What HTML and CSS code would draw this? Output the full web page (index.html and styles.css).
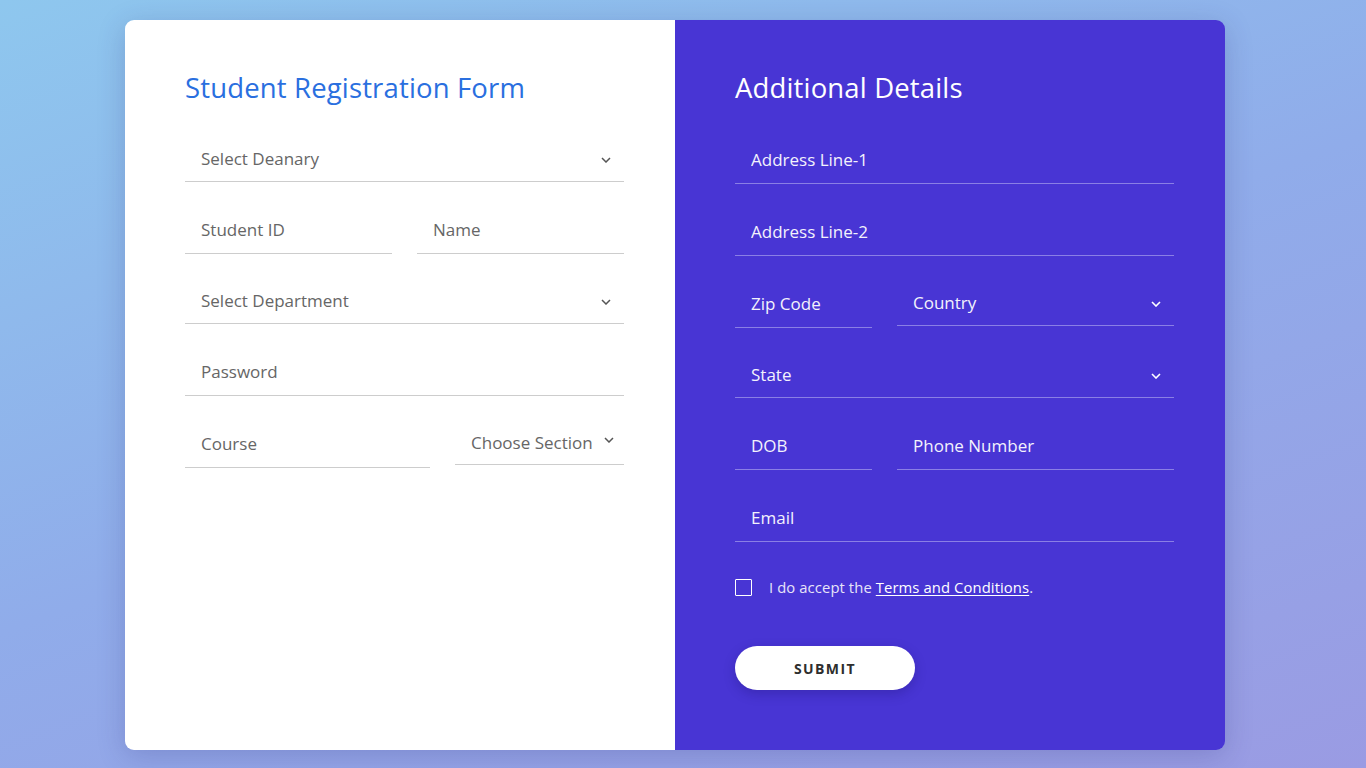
FILE: index.html
```html
<!DOCTYPE html>
<html lang="en">
<head>
<meta charset="utf-8">
<title>Student Registration Form</title>
<link rel="stylesheet" href="styles.css">
</head>
<body>
<section class="page">
  <div class="card">
    <div class="panel panel-light">
      <h3 class="title title-blue">Student Registration Form</h3>

      <div class="field-select">
        <select class="select light">
          <option>Select Deanary</option>
        </select>
        <svg class="chev" width="10" height="6" viewBox="0 0 10 6"><polyline points="1,1 5,5 9,1" fill="none" stroke="#555" stroke-width="1.5"/></svg>
      </div>

      <div class="row two-equal">
        <input class="input light" type="text" placeholder="Student ID">
        <input class="input light" type="text" placeholder="Name">
      </div>

      <div class="field-select">
        <select class="select light">
          <option>Select Department</option>
        </select>
        <svg class="chev" width="10" height="6" viewBox="0 0 10 6"><polyline points="1,1 5,5 9,1" fill="none" stroke="#555" stroke-width="1.5"/></svg>
      </div>

      <input class="input light block" type="password" placeholder="Password">

      <div class="row course-row">
        <input class="input light" type="text" placeholder="Course">
        <div class="field-select">
          <select class="select light">
            <option>Choose Section</option>
          </select>
          <svg class="chev chev-near" width="10" height="6" viewBox="0 0 10 6"><polyline points="1,1 5,5 9,1" fill="none" stroke="#555" stroke-width="1.5"/></svg>
        </div>
      </div>
    </div>

    <div class="panel panel-dark">
      <h3 class="title title-white">Additional Details</h3>

      <input class="input dark block" type="text" placeholder="Address Line-1">
      <input class="input dark block" type="text" placeholder="Address Line-2">

      <div class="row zip-row">
        <input class="input dark" type="text" placeholder="Zip Code">
        <div class="field-select">
          <select class="select dark">
            <option>Country</option>
          </select>
          <svg class="chev" width="10" height="6" viewBox="0 0 10 6"><polyline points="1,1 5,5 9,1" fill="none" stroke="#fff" stroke-width="1.6"/></svg>
        </div>
      </div>

      <div class="field-select">
        <select class="select dark">
          <option>State</option>
        </select>
        <svg class="chev" width="10" height="6" viewBox="0 0 10 6"><polyline points="1,1 5,5 9,1" fill="none" stroke="#fff" stroke-width="1.6"/></svg>
      </div>

      <div class="row zip-row">
        <input class="input dark" type="text" placeholder="DOB">
        <input class="input dark" type="text" placeholder="Phone Number">
      </div>

      <input class="input dark block" type="email" placeholder="Email">

      <label class="check">
        <input type="checkbox" class="check-box">
        <span class="check-text">I do accept the <a href="#" class="terms">Terms and Conditions</a>.</span>
      </label>

      <button type="button" class="submit">SUBMIT</button>
    </div>
  </div>
</section>
<script src="script.js"></script>
</body>
</html>
```

FILE: styles.css
```css
* { box-sizing: border-box; }

html, body { margin: 0; }

body {
  font-family: "Open Sans", "Liberation Sans", sans-serif;
  background: linear-gradient(160deg, #8ec7ee 0%, #90acea 50%, #9a9be3 100%);
  background-attachment: fixed;
  min-height: 100vh;
}

.page {
  padding: 96px 16px 96px 0;
}

.card {
  width: 1100px;
  height: 730px;
  margin: 0 auto;
  display: grid;
  grid-template-columns: 550px 550px;
  border-radius: 9px;
  overflow: hidden;
  box-shadow: 0 6px 28px rgba(40, 40, 120, 0.22);
}

.panel {
  padding: 51px 51px 48px 60px;
  display: flex;
  flex-direction: column;
}

.panel-light { background: #fff; }
.panel-dark { background: #4835d4; }

.title {
  margin: 0 0 31px 0;
  font-size: 27.5px;
  line-height: 34px;
  font-weight: 400;
  letter-spacing: 0.15px;
}
.title-blue { color: #2a6fdf; }
.title-white { color: #fff; }

.row {
  display: grid;
  column-gap: 25px;
  align-items: start;
}
.two-equal { grid-template-columns: 1fr 1fr; }
.course-row { grid-template-columns: 245px 1fr; }
.zip-row { grid-template-columns: 137px 1fr; }

.input, .select {
  display: block;
  width: 100%;
  border: 0;
  border-bottom: 1px solid #cfcfcf;
  background: transparent;
  outline: none;
  font-family: "Open Sans", "Liberation Sans", sans-serif;
  font-size: 17px;
  padding: 0 16px;
  margin: 0 0 24px 0;
  border-radius: 0;
}

.input { height: 48px; }
.select {
  height: 46px;
  -webkit-appearance: none;
  appearance: none;
  cursor: pointer;
}

.light { color: #666; border-bottom-color: #cdcdcd; }
.light::placeholder { color: #666; opacity: 1; }

.dark { color: #f3f2fc; border-bottom-color: #8a7fe5; }
.dark::placeholder { color: #f3f2fc; opacity: 1; }

.field-select {
  position: relative;
}

.chev {
  position: absolute;
  right: 13px;
  top: 21px;
  pointer-events: none;
}
.chev-near { right: 10px; top: 17px; }

.course-row .select { height: 45px; }

.check {
  display: flex;
  align-items: center;
  gap: 17px;
  margin-top: 11px;
  cursor: pointer;
}

.check-box {
  -webkit-appearance: none;
  appearance: none;
  width: 17px;
  height: 17px;
  margin: 0;
  border: 1.5px solid #fff;
  border-radius: 1px;
  background: transparent;
}

.check-text {
  font-size: 14.8px;
  color: #e7e4f8;
  letter-spacing: 0.1px;
}

.terms {
  color: #fff;
  text-decoration: underline;
  text-underline-offset: 2px;
}

.submit {
  margin-top: 49px;
  width: 180px;
  height: 44px;
  border: 0;
  border-radius: 22px;
  background: #fff;
  color: #2e2e2e;
  font-family: "Open Sans", "Liberation Sans", sans-serif;
  font-weight: 700;
  font-size: 14px;
  letter-spacing: 1.4px;
  box-shadow: 0 4px 12px rgba(20, 10, 90, 0.25);
  cursor: pointer;
}
```

FILE: script.js
```js
window.scrollTo(0, 76);
window.addEventListener('load', function () {
  window.scrollTo(0, 76);
});
```
